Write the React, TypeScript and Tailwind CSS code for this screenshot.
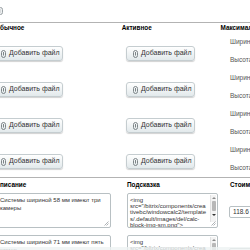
import React from "react";

const font = { fontFamily: '"Liberation Sans", Arial, sans-serif' };

function Clip() {
  return (
    <svg width="5" height="8" viewBox="0 0 5 8" fill="none" aria-hidden="true">
      <rect x="0.5" y="0.5" width="4" height="7" rx="2" stroke="#7d8588" strokeWidth="1" />
      <path d="M2.5 2v3.5" stroke="#7d8588" strokeWidth="1" />
    </svg>
  );
}

function AddButton() {
  return (
    <div className="flex h-[15px] w-[69px] items-center gap-[3px] rounded-[3px] border border-[#c5cdd0] bg-gradient-to-b from-white to-[#e2e9eb] pl-[6px] text-[7px] text-[#333] shadow-[0_1px_1px_rgba(0,0,0,0.18)]">
      <Clip />
      <span className="whitespace-nowrap">Добавить файл</span>
    </div>
  );
}

function Grip() {
  return (
    <svg
      width="5"
      height="5"
      viewBox="0 0 5 5"
      className="absolute bottom-[1px] right-[1px]"
      aria-hidden="true"
    >
      <path d="M4.5 0.5 L0.5 4.5 M4.5 2.5 L2.5 4.5" stroke="#9aa0a3" strokeWidth="0.8" />
    </svg>
  );
}

function Scrollbar() {
  return (
    <div className="absolute right-[1px] top-[1px] flex h-[27px] w-[6px] flex-col items-center border-l border-[#e2e2e2] bg-[#f3f3f3]">
      <span className="mt-[2px] h-0 w-0 border-x-[2px] border-b-[2px] border-x-transparent border-b-[#8a8a8a]" />
      <span className="mt-[2px] h-[10px] w-[4px] rounded-[1px] bg-[#b8b8b8]" />
      <span className="mt-[3px] h-0 w-0 border-x-[2px] border-t-[2px] border-x-transparent border-t-[#333]" />
    </div>
  );
}

const hint =
  '<img src="/bitrix/components/creativebc/windowcalc2/templates/.default/images/del/calc-block-img-sm.png">';

function Row({ text, price }: { text: string; price: string }) {
  return (
    <div className="flex h-[42px]">
      <div className="w-[132px]">
        <div className="relative ml-[3px] mt-[2px] h-[35px] w-[114px] rounded-[2px] border border-[#b8c0c3] bg-white px-[2px] pt-[2px] text-[6px] leading-[8px] text-[#333]">
          {text}
          <Grip />
        </div>
      </div>
      <div className="w-[103px]">
        <div className="relative ml-[1px] mt-[2px] h-[35px] w-[91px] overflow-hidden rounded-[2px] border border-[#b8c0c3] bg-white pl-[2px] pt-[3px] text-[6px] leading-[6.2px] text-[#333]">
          <div className="w-[77px] break-words">{hint}</div>
          <Scrollbar />
          <Grip />
        </div>
      </div>
      <div className="flex items-center">
        <div className="flex h-[12px] w-[34px] items-center rounded-[2px] border border-[#b8c0c3] bg-white pl-[3px] text-[6.5px] text-[#333]">
          {price}
        </div>
      </div>
    </div>
  );
}

export default function App() {
  return (
    <div className="relative h-[250px] w-[250px] overflow-hidden bg-white" style={font}>
      <div className="ml-[-6px] flex w-[300px] flex-col">
        {/* top strip */}
        <div className="flex h-[22px] items-center pl-[1px]">
          <svg width="8" height="8" viewBox="0 0 8 8" aria-hidden="true">
            <rect x="0.5" y="0.5" width="7" height="7" rx="2" fill="#eef0f1" stroke="#9aa1a4" />
            <path d="M2.5 3h3M2.5 5h3" stroke="#9aa1a4" />
          </svg>
        </div>

        {/* images header */}
        <div className="flex h-[11px] items-center whitespace-nowrap border-t border-[#b3b3b3] text-[6.4px] font-bold text-black">
          <div className="w-[132px] pl-[1px]">Обычное</div>
          <div className="w-[103px] pl-[1px]">Активное</div>
          <div className="pl-[1px]">Максимальный размер</div>
        </div>

        {[0, 1, 2, 3].map((i) => (
          <div key={i} className="flex h-[36px]">
            <div className="w-[132px] pt-[13px]">
              <AddButton />
            </div>
            <div className="w-[103px] pt-[13px]">
              <AddButton />
            </div>
            <div className="flex flex-col pl-[1px] text-[6.5px] text-[#555]">
              <div className="flex h-[18px] items-center">Ширина</div>
              <div className="flex h-[18px] items-center">Высота</div>
            </div>
          </div>
        ))}

        {/* description header */}
        <div className="flex h-[14px] items-center whitespace-nowrap border-t border-[#b3b3b3] text-[6.4px] font-bold text-black">
          <div className="w-[132px] pl-[1px]">Описание</div>
          <div className="w-[103px] pl-[1px]">Подсказка</div>
          <div className="pl-[1px]">Стоимость</div>
        </div>

        <Row text="Системы шириной 58 мм имеют три камеры" price="118.6" />
        <Row text="Системы шириной 71 мм имеют пять камер" price="135.2" />
      </div>
      <div className="absolute bottom-0 left-0 h-[3px] w-full bg-[#eef2f3]/80" />
    </div>
  );
}
